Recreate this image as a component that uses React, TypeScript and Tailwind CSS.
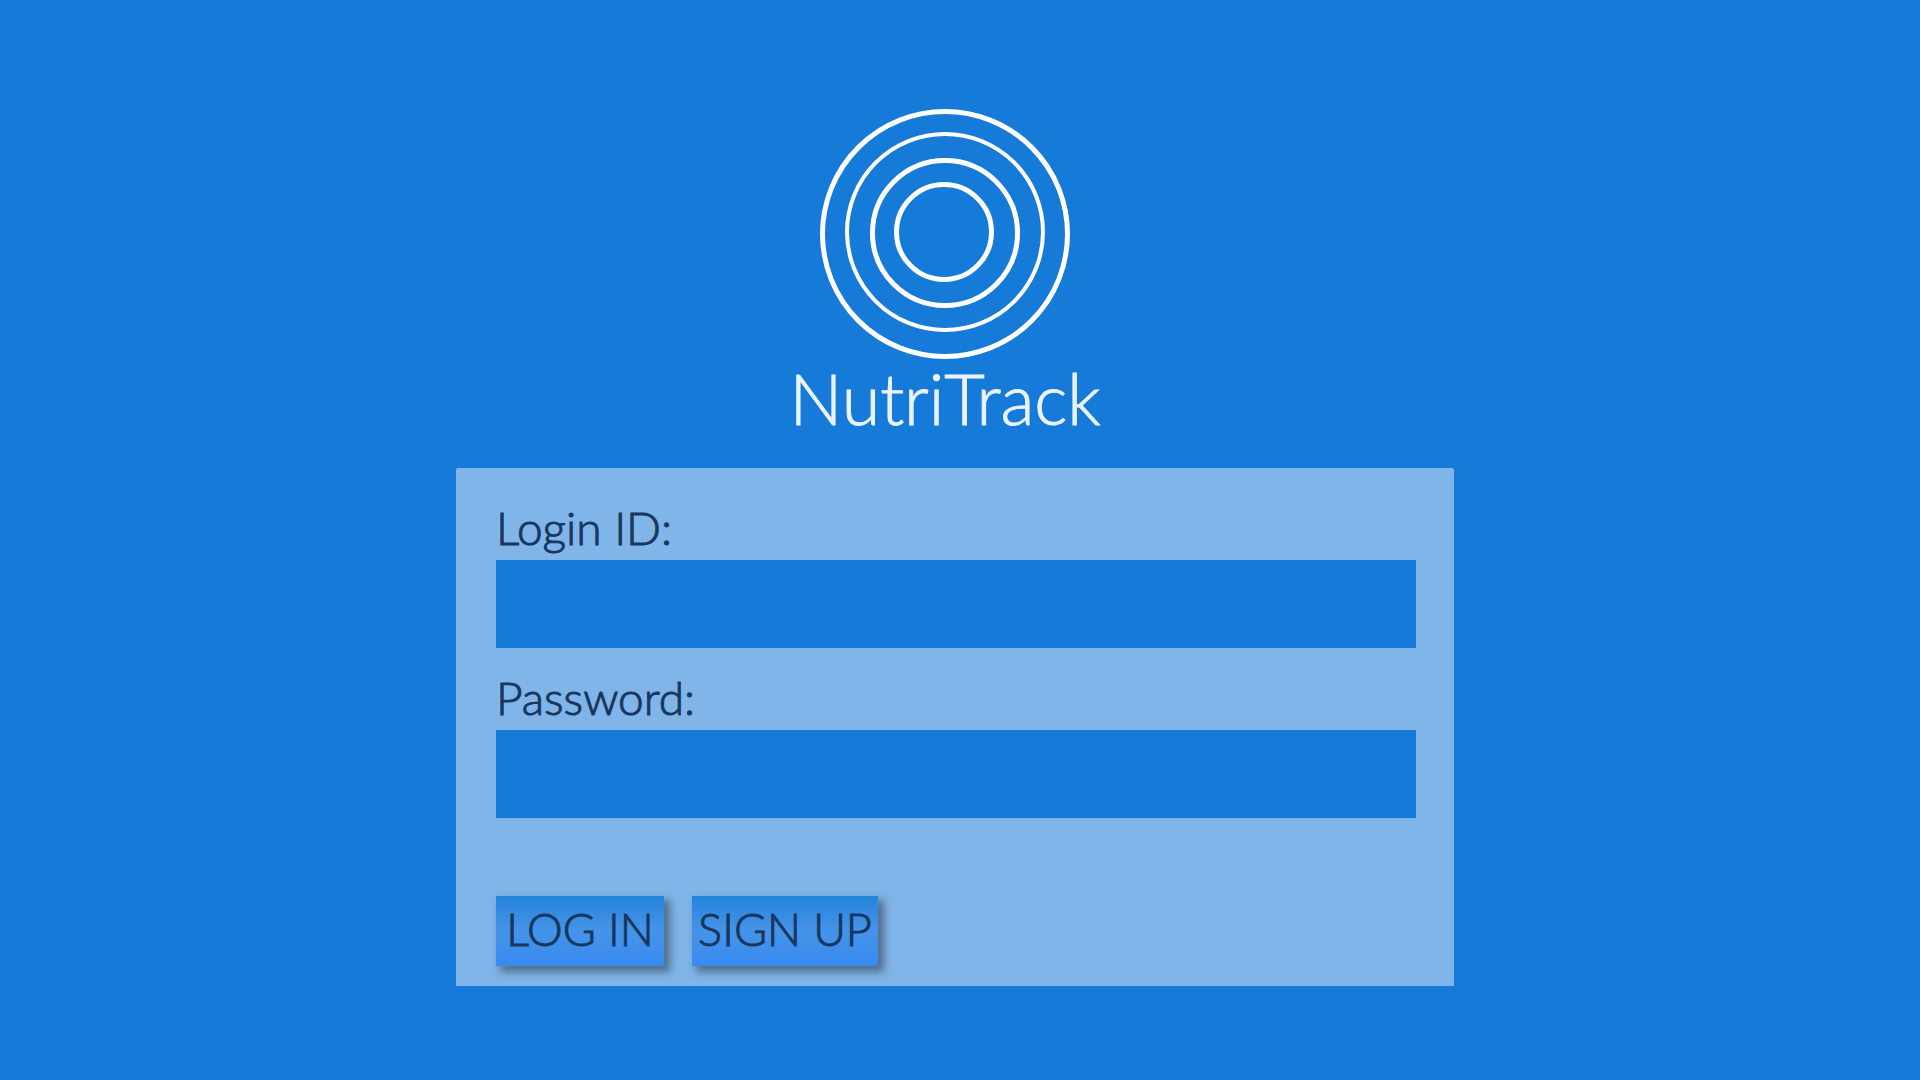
import type { ReactNode } from "react";

function Logo() {
  return (
    <svg
      viewBox="0 0 250 250"
      className="size-[250px]"
      fill="none"
      stroke="#ffffff"
      aria-hidden="true"
    >
      <circle cx="125" cy="125" r="122.5" strokeWidth="5" />
      <circle cx="125" cy="123" r="98" strokeWidth="4" />
      <circle cx="125" cy="124" r="72.5" strokeWidth="5" />
      <circle cx="124" cy="123" r="47.5" strokeWidth="5" />
    </svg>
  );
}

function Field({ id, label, type }: { id: string; label: string; type: string }) {
  return (
    <div className="flex flex-col gap-0.5">
      <label htmlFor={id} className="text-[46px] leading-[61px] text-[#17375e]">
        {label}
      </label>
      <input
        id={id}
        name={id}
        type={type}
        className="h-[88px] w-full bg-[#167ad8] px-6 text-4xl text-white outline-none"
      />
    </div>
  );
}

function ActionButton({ type, children }: { type: "submit" | "button"; children: ReactNode }) {
  return (
    <button
      type={type}
      className="h-[70px] cursor-pointer bg-linear-to-b from-[#2383db] via-[#4594e8] via-50% to-[#388af0] px-1 pb-1 text-center text-[45px] leading-[66px] whitespace-nowrap text-[#17375e] shadow-[5px_5px_8px_1px_rgba(60,80,95,0.7)] [-webkit-text-stroke:1px] first:min-w-[168px] last:min-w-[186px]"
    >
      {children}
    </button>
  );
}

export default function App() {
  return (
    <main className="flex min-h-screen flex-col items-center bg-[#167ad8] pt-[109px] pr-[10px] pb-[94px] font-[Lato,'Open_Sans',sans-serif] font-light [-webkit-text-stroke:1px]">
      <header className="flex flex-col items-center pr-5">
        <Logo />
        <h1 className="text-[70px] leading-[78px] text-[#eaf3fe]">NutriTrack</h1>
      </header>

      <form
        className="mt-[31px] w-full max-w-[998px] rounded-t-xs bg-[#80b5e9] pt-[29px] pr-[38px] pb-5 pl-10"
        onSubmit={(event) => event.preventDefault()}
      >
        <div className="flex flex-col gap-[19px]">
          <Field id="login-id" label="Login ID:" type="text" />
          <Field id="password" label="Password:" type="password" />
        </div>
        <div className="mt-[78px] flex gap-7">
          <ActionButton type="submit">LOG IN</ActionButton>
          <ActionButton type="button">SIGN UP</ActionButton>
        </div>
      </form>
    </main>
  );
}
